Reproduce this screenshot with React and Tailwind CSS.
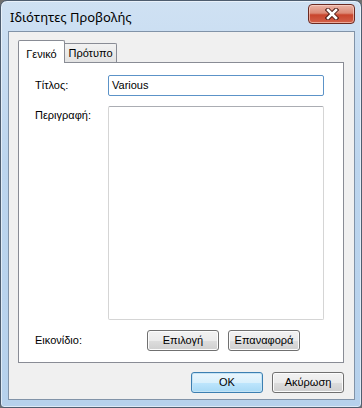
import React from 'react';

const font = { fontFamily: '"Liberation Sans", Tahoma, sans-serif' };

const Button = ({ children, primary }) => (
  <button
    className={
      'w-[72px] h-[21px] rounded-[3px] border text-[11px] text-black flex items-center justify-center ' +
      (primary
        ? 'border-[#3c7fb1] bg-[linear-gradient(#eaf6fd_0%,#d9f0fc_50%,#bee6fd_51%,#a7d9f5_100%)] shadow-[inset_0_0_0_1px_#c4e3f5]'
        : 'border-[#707070] bg-[linear-gradient(#f2f2f2_0%,#ebebeb_50%,#dddddd_51%,#cfcfcf_100%)] shadow-[inset_0_0_0_1px_#fcfcfc]')
    }
    style={font}
  >
    {children}
  </button>
);

const CloseButton = () => (
  <div className="mt-[3px] w-[47px] h-[20px] rounded-[4px] border border-[#6a2a22] bg-[linear-gradient(#eab3a6_0%,#dc8a76_45%,#c8452d_55%,#d3614a_100%)] shadow-[inset_0_0_0_1px_rgba(255,220,210,0.6)] flex items-center justify-center">
    <svg width="14" height="12" viewBox="0 0 14 12">
      <path d="M3 2 L11 10 M11 2 L3 10" stroke="#4a1a14" strokeWidth="4.5" strokeLinecap="square" />
      <path d="M3 2 L11 10 M11 2 L3 10" stroke="#ffffff" strokeWidth="2.6" strokeLinecap="square" />
    </svg>
  </div>
);

export default function App() {
  return (
    <div className="w-[362px] h-[408px] bg-[#6f6f6f]">
      <div className="w-full h-full rounded-t-[7px] rounded-b-[4px] border border-[#4e5d6f] bg-[linear-gradient(#cfe1f3_0%,#bcd5ee_40%,#b6d1ec_100%)] shadow-[inset_0_0_0_1px_rgba(255,255,255,0.55)] flex flex-col pl-[7px] pr-[6px] pb-[7px]">
        <div className="h-[30px] flex items-start justify-between">
          <span
            className="mt-[7px] pl-[2px] text-[13px] leading-[18px] text-black"
            style={{ fontFamily: '"Noto Sans", "Open Sans", sans-serif' }}
          >
            Ιδιότητες Προβολής
          </span>
          <CloseButton />
        </div>

        <div className="flex-1 border border-[#8193a8] bg-[#f0f0f0] flex flex-col pt-[8px] pl-[9px] pr-[10px]" style={font}>
          <div className="flex items-end h-[22px] relative z-10">
            <div className="w-[47px] h-[23px] -mb-[1px] border border-b-0 border-[#898c95] bg-white rounded-t-[2px] text-[11px] flex items-start justify-center pt-[5px] text-black">
              Γενικό
            </div>
            <div className="w-[52px] h-[19px] border border-l-0 border-b-0 border-[#898c95] bg-[linear-gradient(#f2f2f2,#e3e3e3)] rounded-tr-[2px] text-[11px] flex items-center justify-center text-black">
              Πρότυπο
            </div>
          </div>

          <div className="w-[326px] border border-[#898c95] bg-white flex flex-col pt-[12px] pl-[16px] pb-[11px]">
            <div className="flex items-center h-[21px]">
              <span className="w-[73px] text-[11px] text-black">Τίτλος:</span>
              <div className="w-[216px] h-[21px] border border-[#5c93c8] rounded-[2px] bg-white flex items-center px-[3px] text-[11px] text-black">
                Various
              </div>
            </div>
            <div className="flex items-start mt-[10px]">
              <span className="w-[73px] text-[11px] text-black pt-[1px]">Περιγραφή:</span>
              <div className="w-[216px] h-[214px] border border-[#d5d5d5] border-t-[#abadb3] rounded-[2px] bg-white"></div>
            </div>
            <div className="flex items-center mt-[10px]">
              <span className="w-[112px] text-[11px] text-black">Εικονίδιο:</span>
              <div className="flex gap-[9px]">
                <Button>Επιλογή</Button>
                <Button>Επαναφορά</Button>
              </div>
            </div>
          </div>

          <div className="flex justify-end gap-[9px] mt-[9px] w-[326px]">
            <Button primary>OK</Button>
            <Button>Ακύρωση</Button>
          </div>
        </div>
      </div>
    </div>
  );
}
